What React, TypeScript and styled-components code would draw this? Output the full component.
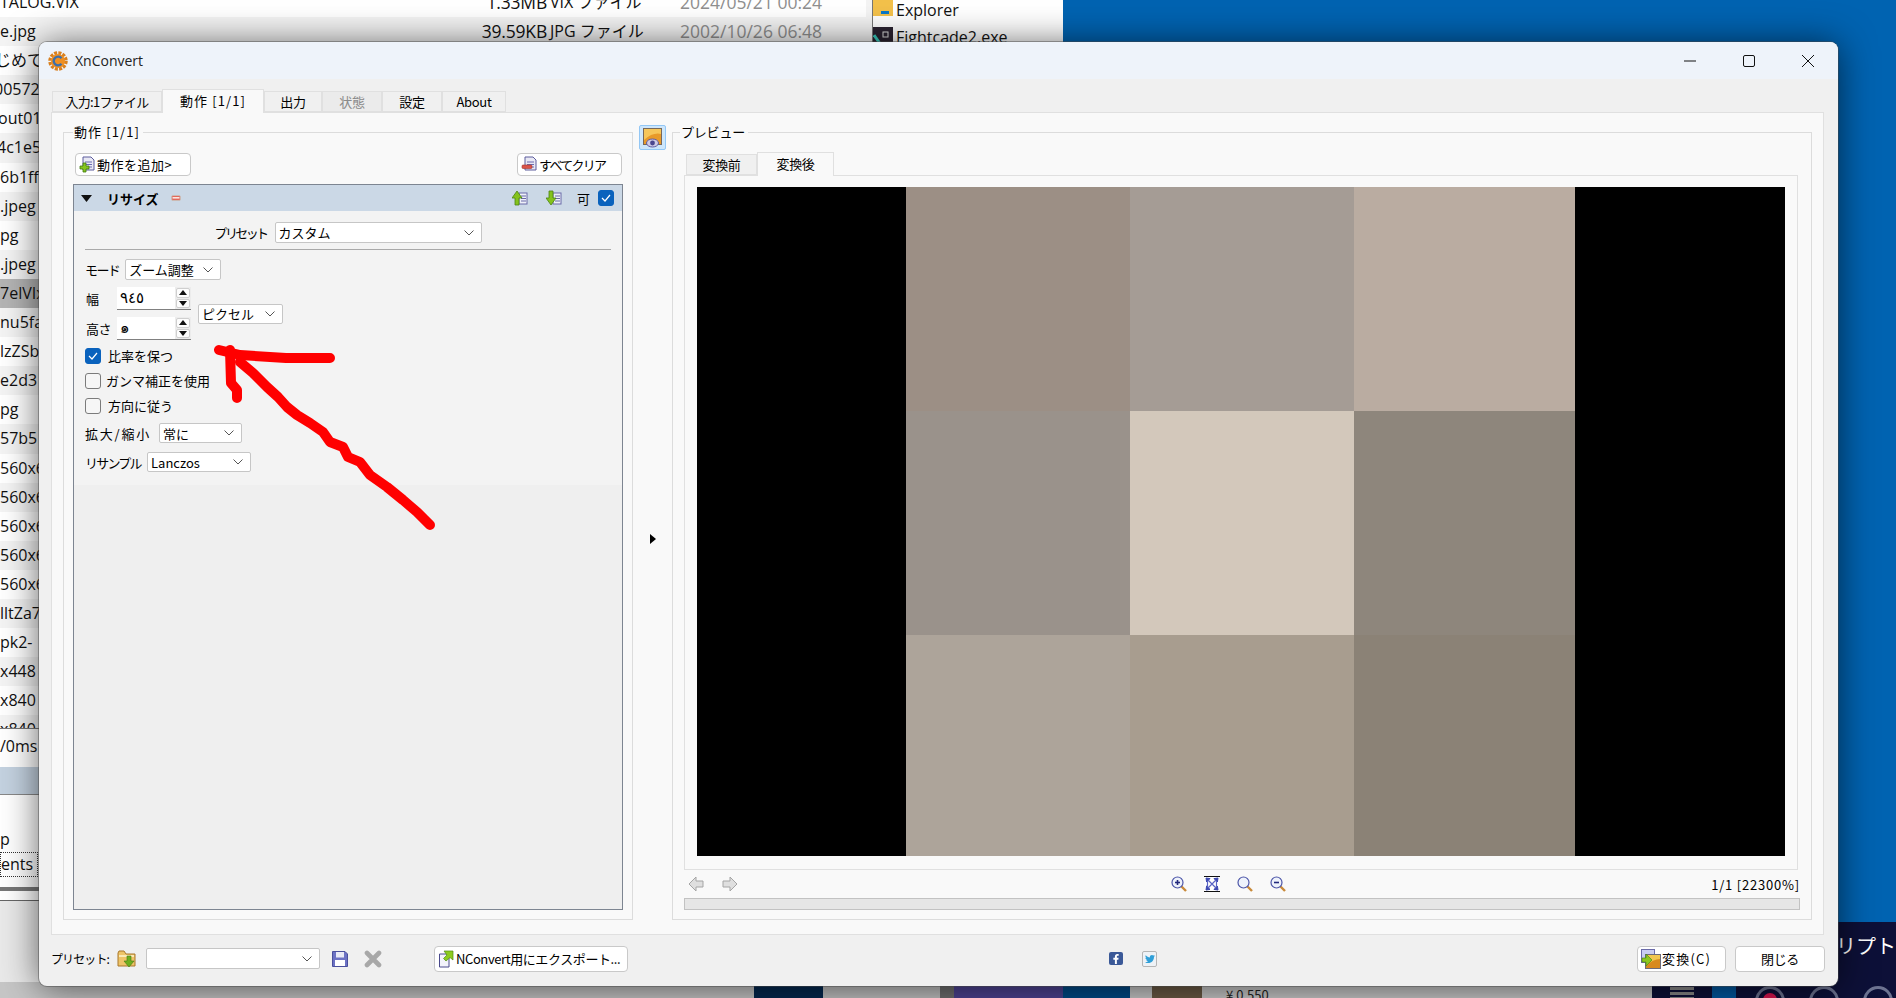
import React from 'react';
import styled, { createGlobalStyle } from 'styled-components';
import { FaFacebookF, FaTwitter } from 'react-icons/fa';

const UI_FONT = `"Noto Sans CJK JP", "Noto Sans", sans-serif`;
const LIST_FONT = `"Open Sans", "Noto Sans CJK JP", sans-serif`;

const GlobalStyle = createGlobalStyle`
	html, body {
		margin: 0;
		padding: 0;
		overflow: hidden;
		background: #0063b1;
	}
	* {
		box-sizing: border-box;
	}
	svg {
		flex-shrink: 0;
	}
`;

// 背景 (デスクトップ)
const Desktop = styled.div`
	position: relative;
	width: 1896px;
	height: 998px;
	overflow: hidden;
	background: #0063b1;
	font-family: ${UI_FONT};
`;

const FileList = styled.div`
	position: absolute;
	left: 0;
	top: 0;
	width: 866px;
	height: 986px;
	display: flex;
	flex-direction: column;
	background: #fff;
	overflow: hidden;
	font-family: ${LIST_FONT};
	font-size: 16px;
	color: #111;
`;

const FileRows = styled.div`
	flex: 0 0 740px;
	margin-top: -12px;
	overflow: hidden;
`;

const FileRow = styled.div<{ $selected?: boolean }>`
	display: grid;
	grid-template-columns: 460px 87px 133px 155px;
	height: 29.1px;
	line-height: 29px;
	white-space: nowrap;
	background: ${(p) => (p.$selected ? '#b4b4b4' : 'transparent')};
	&:nth-child(even) {
		background: ${(p) => (p.$selected ? '#b4b4b4' : '#f4f4f4')};
	}
`;

const FileName = styled.span<{ $shift?: number }>`
	margin-left: ${(p) => p.$shift ?? 0}px;
`;

const FileSize = styled.span`
	text-align: right;
	font-size: 17.5px;
	letter-spacing: -0.2px;
`;

const FileType = styled.span`
	padding-left: 3px;
`;

const FileDate = styled.span`
	color: #8f8f8f;
	font-size: 17.5px;
`;

const LogLine = styled.div`
	flex: 0 0 39px;
	border-top: 1px solid #777;
	line-height: 34px;
`;

const LogBand = styled.div`
	flex: 0 0 28px;
	background: #c4d2e0;
	border-bottom: 1px solid #888;
`;

const LogText = styled.div`
	flex: 0 0 56px;
	padding-top: 31px;
	line-height: 26px;
`;

const LogFocus = styled.div`
	flex: 0 0 25px;
	width: 38px;
	line-height: 22px;
	border: 1px dotted #333;
`;

const LogSplit = styled.div`
	flex: 0 0 4px;
	margin-top: 10px;
	background: #777;
`;

const LogRule = styled.div`
	flex: 0 0 1px;
	margin-top: 9px;
	background: #666;
`;

const LogTail = styled.div`
	flex: 1;
	background: #e9e9e9;
`;

const ExplorerPane = styled.div`
	position: absolute;
	left: 866px;
	top: 0;
	width: 197px;
	height: 60px;
	padding-left: 6px;
	background: #f4f4f4;
	font-family: ${LIST_FONT};
	font-size: 16px;
	color: #111;
`;

const ExplorerList = styled.div`
	height: 100%;
	padding-top: 0;
	background: #fff;
	border-left: 1px solid #777;
`;

const ExplorerItem = styled.div`
	display: flex;
	align-items: center;
	gap: 3px;
	height: 29px;
	margin-top: -5px;
	margin-bottom: 3px;
	white-space: nowrap;
`;

const BottomStrip = styled.div`
	position: absolute;
	left: 0;
	bottom: 0;
	width: 100%;
	height: 16px;
	display: flex;
	background: #c9c9c9;
`;

const StripPart = styled.div<{ $w: number; $bg: string }>`
	flex: 0 0 ${(p) => p.$w}px;
	display: flex;
	justify-content: center;
	background: ${(p) => p.$bg};
`;

const StripPrice = styled.span`
	margin: 6px auto 0 24px;
	font-size: 13px;
	line-height: 14px;
	color: #222;
`;

const StandShape = styled.div`
	width: 24px;
	height: 16px;
	margin-top: 0;
	background: repeating-linear-gradient(#8a8a8a 0 3px, #0d1038 3px 5px);
`;

const NavyPanel = styled.div`
	position: absolute;
	right: 0;
	top: 922px;
	width: 70px;
	height: 76px;
	padding: 10px 0 0 10px;
	background: #0d1038;
	color: #fff;
	font-size: 20px;
	line-height: 28px;
	white-space: nowrap;
`;

const TrayIcons = styled.div`
	position: absolute;
	left: 1755px;
	top: 986px;
	display: flex;
	gap: 24px;
`;

const TrayRing = styled.div<{ $color: string }>`
	width: 30px;
	height: 30px;
	border: 3px solid #6d7391;
	border-radius: 50%;
	display: flex;
	justify-content: center;
	padding-top: 4px;
	&::after {
		content: '';
		width: 14px;
		height: 14px;
		border-radius: 50%;
		background: ${(p) => p.$color};
	}
`;

// XnConvert ウィンドウ
const AppWindow = styled.div`
	position: absolute;
	left: 39px;
	top: 42px;
	width: 1799px;
	height: 944px;
	display: flex;
	flex-direction: column;
	background: #f0f0f0;
	border-radius: 8px;
	box-shadow: 0 0 0 1px rgba(70, 70, 70, 0.45), 0 2px 36px rgba(0, 0, 0, 0.62);
	overflow: hidden;
	color: #000;
	font-size: 13px;
`;

const TitleBar = styled.div`
	flex: 0 0 37px;
	display: flex;
	align-items: center;
	padding-left: 9px;
	background: #eef3fa;
`;

const AppTitle = styled.span`
	margin-left: 7px;
	font-family: "Open Sans", sans-serif;
	font-size: 14px;
	color: #222;
`;

const WindowButtons = styled.div`
	margin-left: auto;
	display: flex;
	padding-right: 24px;
	gap: 47px;
	padding-top: 1px;
`;

const Body = styled.div`
	flex: 1;
	display: flex;
	flex-direction: column;
	min-height: 0;
	padding: 0 14px 0 12px;
`;

const TabBar = styled.div<{ $h: number }>`
	flex: 0 0 ${(p) => p.$h}px;
	display: flex;
	align-items: flex-end;
	padding-left: ${(p) => (p.$h > 30 ? 1 : 2)}px;
`;

const Tab = styled.div<{ $w: number; $active?: boolean; $off?: boolean; $track?: number }>`
	position: relative;
	width: ${(p) => p.$w}px;
	height: ${(p) => (p.$active ? 24 : 21)}px;
	margin-bottom: ${(p) => (p.$active ? -1 : 0)}px;
	padding-bottom: ${(p) => (p.$active ? 2 : 1)}px;
	display: flex;
	align-items: center;
	justify-content: center;
	border: 1px solid #e0e0e0;
	border-bottom: ${(p) => (p.$active ? 'none' : '1px solid #e0e0e0')};
	background: ${(p) => (p.$active ? '#f9f9f9' : p.$off ? '#ebebeb' : '#f0f0f0')};
	color: ${(p) => (p.$off ? '#8a8a8a' : '#000')};
	font-size: 13px;
	letter-spacing: ${(p) => p.$track ?? -0.3}px;
	white-space: nowrap;
	z-index: ${(p) => (p.$active ? 1 : 0)};
`;

const TabPane = styled.div`
	flex: 0 0 822px;
	display: flex;
	padding: 19px 11px 14px;
	background: #f9f9f9;
	border: 1px solid #e0e0e0;
`;

const Group = styled.div<{ $width?: number }>`
	position: relative;
	flex: ${(p) => (p.$width ? `0 0 ${p.$width}px` : '1')};
	display: flex;
	flex-direction: column;
	min-width: 0;
	border: 1px solid #dcdcdc;
`;

const GroupTitle = styled.span<{ $left: number; $track: number }>`
	position: absolute;
	left: ${(p) => p.$left}px;
	top: -11px;
	padding: 0 3px 0 1px;
	background: #f9f9f9;
	font-size: 13px;
	line-height: 20px;
	letter-spacing: ${(p) => p.$track}px;
`;

const ActionColumn = styled.div`
	flex: 1;
	display: flex;
	flex-direction: column;
	padding: 20px 9px 9px;
`;

const ButtonRow = styled.div`
	flex: 0 0 23px;
	display: flex;
	justify-content: space-between;
	padding: 0 1px 0 2px;
	margin-bottom: 8px;
`;

const PushButton = styled.div<{ $w: number; $h?: number; $track?: number; $center?: boolean }>`
	width: ${(p) => p.$w}px;
	height: ${(p) => p.$h ?? 23}px;
	display: flex;
	align-items: center;
	justify-content: ${(p) => (p.$center ? 'center' : 'flex-start')};
	gap: 1px;
	padding-left: ${(p) => (p.$center ? 0 : 3)}px;
	background: #fff;
	border: 1px solid #c9c9c9;
	border-radius: 4px;
	font-size: 13px;
	letter-spacing: ${(p) => p.$track ?? -0.4}px;
	white-space: nowrap;
`;

const ActionPanel = styled.div`
	flex: 1;
	display: flex;
	flex-direction: column;
	background: #efefef;
	border: 1px solid #7d8591;
`;

const ActionHeader = styled.div`
	flex: 0 0 26px;
	display: flex;
	align-items: center;
	padding: 0 8px 0 7px;
	background: #cbd8e6;
`;

const ActionName = styled.span`
	margin-left: 15px;
	width: 64px;
	font-weight: 700;
	font-size: 13px;
`;

const HeaderTools = styled.div`
	margin-left: auto;
	display: flex;
	align-items: center;
`;

const EnableLabel = styled.span`
	margin: 0 8px 0 15px;
	font-size: 13px;
`;

const ActionBody = styled.div`
	flex: 0 0 274px;
	display: flex;
	flex-direction: column;
	padding: 11px 11px 0;
	background: #f3f3f3;
`;

const PresetRow = styled.div`
	display: flex;
	align-items: center;
	justify-content: center;
	gap: 8px;
	height: 21px;
`;

const Divider = styled.div`
	height: 1px;
	margin: 6px 0 9px;
	background: #a9a9a9;
`;

const Field = styled.div<{ $gap?: number }>`
	display: flex;
	align-items: center;
	gap: ${(p) => p.$gap ?? 6}px;
	height: 21px;
	margin-bottom: 7px;
`;

const FieldLabel = styled.span<{ $w?: number; $track?: number }>`
	${(p) => (p.$w ? `flex: 0 0 ${p.$w}px;` : '')}
	font-size: 13px;
	letter-spacing: ${(p) => p.$track ?? -0.5}px;
	white-space: nowrap;
`;

const Combo = styled.div<{ $w: number; $h?: number }>`
	flex: 0 0 ${(p) => p.$w}px;
	width: ${(p) => p.$w}px;
	height: ${(p) => p.$h ?? 21}px;
	display: flex;
	align-items: center;
	justify-content: space-between;
	padding: 0 7px 0 3px;
	background: #fff;
	border: 1px solid #c6c6c6;
	border-radius: 2px;
	font-size: 13px;
	white-space: nowrap;
`;

const SizeBlock = styled.div`
	display: flex;
	align-items: center;
	gap: 7px;
	margin-left: 1px;
`;

const SizeGrid = styled.div`
	display: grid;
	grid-template-columns: 31px 74px;
	row-gap: 7px;
	align-items: center;
`;

const SpinField = styled.div`
	display: flex;
	height: 23px;
	background: #ececec;
`;

const SpinValue = styled.div`
	flex: 1;
	padding-left: 3px;
	background: #fff;
	border-bottom: 1px solid #808080;
	font-family: "DejaVu Sans", "Noto Sans", sans-serif;
	font-size: 15px;
	line-height: 22px;
	letter-spacing: 1px;
`;

const SpinButtons = styled.div`
	flex: 0 0 16px;
	display: flex;
	flex-direction: column;
	gap: 1px;
	padding: 1px;
	border-bottom: 1px solid #808080;
`;

const SpinStep = styled.div`
	flex: 1;
	display: flex;
	align-items: center;
	justify-content: center;
	background: #fdfdfd;
	border: 1px solid #cfcfcf;
	border-radius: 2px;
`;

const Check = styled.div<{ $gap?: number; $top?: number }>`
	display: flex;
	align-items: center;
	gap: ${(p) => p.$gap ?? 7}px;
	height: 16px;
	margin-top: ${(p) => p.$top ?? 9}px;
	font-size: 13px;
	line-height: 14px;
	white-space: nowrap;
`;

const CheckBox = styled.span<{ $on?: boolean }>`
	flex: 0 0 16px;
	width: 16px;
	height: 16px;
	display: flex;
	align-items: center;
	justify-content: center;
	background: ${(p) => (p.$on ? '#0a62bd' : '#f6f6f6')};
	border: 1px solid ${(p) => (p.$on ? '#0a62bd' : '#7b7b7b')};
	border-radius: 3px;
`;

const SelectField = styled(Field)`
	height: 20px;
	margin: 9px 0 0;
`;

const Splitter = styled.div`
	flex: 0 0 39px;
	display: flex;
	flex-direction: column;
	align-items: center;
`;

const ViewToggle = styled.div`
	flex: 0 0 25px;
	width: 27px;
	margin-top: -7px;
	display: flex;
	align-items: center;
	justify-content: center;
	background: #cde6fb;
	border: 1px solid #93c7f5;
	border-radius: 2px;
`;

const CollapseArrow = styled.div`
	margin-top: 384px;
	border-left: 6px solid #000;
	border-top: 5px solid transparent;
	border-bottom: 5px solid transparent;
`;

const PreviewColumn = styled.div`
	flex: 1;
	display: flex;
	flex-direction: column;
	min-height: 0;
	padding: 19px 11px 9px 11px;
`;

const PreviewPane = styled.div`
	flex: 0 0 695px;
	margin-right: 2px;
	padding: 11px 12px 13px;
	background: #f9f9f9;
	border: 1px solid #e0e0e0;
`;

const PreviewImage = styled.div`
	display: grid;
	grid-template-columns: 209px 224px 224px 221px 210px;
	grid-template-rows: 224px 224px 221px;
	height: 669px;
`;

const Matte = styled.div<{ $col: number }>`
	grid-row: 1 / span 3;
	grid-column: ${(p) => p.$col};
	background: #000;
`;

const Tile = styled.div<{ $c: string }>`
	background: ${(p) => p.$c};
`;

const ViewTools = styled.div`
	flex: 0 0 28px;
	display: flex;
	align-items: center;
	padding-left: 4px;
`;

const NavGroup = styled.div`
	flex: 0 0 483px;
	display: flex;
	gap: 18px;
`;

const ZoomGroup = styled.div`
	display: flex;
	gap: 17px;
`;

const ZoomLabel = styled.span`
	margin-left: auto;
	font-size: 13px;
	letter-spacing: 0.8px;
`;

const ScrollTrack = styled.div`
	flex: 0 0 12px;
	background: #e6e6e6;
	border: 1px solid #c2c2c2;
`;

const Footer = styled.div`
	flex: 1;
	display: flex;
	align-items: center;
	margin-right: -14px;
	padding-bottom: 4px;
`;

const FooterLabel = styled.span`
	flex: 0 0 66px;
	font-size: 12px;
	letter-spacing: -0.9px;
	white-space: nowrap;
`;

const Spaced = styled.div<{ $left: number }>`
	display: flex;
	margin-left: ${(p) => p.$left}px;
`;

const SocialBox = styled.div<{ $bg: string; $c: string; $line?: string }>`
	width: ${(p) => (p.$line ? 15 : 14)}px;
	height: ${(p) => (p.$line ? 16 : 13)}px;
	display: flex;
	align-items: center;
	justify-content: center;
	background: ${(p) => p.$bg};
	color: ${(p) => p.$c};
	border: ${(p) => (p.$line ? `1px solid ${p.$line}` : 'none')};
	border-radius: 2px;
	font-size: 10px;
`;

const ScribbleLayer = styled.svg`
	position: absolute;
	left: 0;
	top: 0;
	pointer-events: none;
`;

// アイコン
const Chevron = () => (
	<svg width='10' height='6' viewBox='0 0 10 6'>
		<path d='M0.5 0.5 L5 5 L9.5 0.5' fill='none' stroke='#555' strokeWidth='1' />
	</svg>
);

const Tick = () => (
	<svg width='10' height='8' viewBox='0 0 10 8'>
		<path d='M1 4 L4 7 L9 1' fill='none' stroke='#fff' strokeWidth='1.2' />
	</svg>
);

const SpinArrow = ({ up }: { up?: boolean }) => (
	<svg width='8' height='5' viewBox='0 0 8 5'>
		<path d={up ? 'M4 0 L8 5 L0 5 Z' : 'M0 0 L8 0 L4 5 Z'} fill='#111' />
	</svg>
);

const CollapseTriangle = () => (
	<svg width='11' height='7' viewBox='0 0 11 7'>
		<path d='M0 0 H11 L5.5 7 Z' fill='#111' />
	</svg>
);

const AppLogo = () => (
	<svg width='20' height='20' viewBox='0 0 20 20'>
		<circle cx='10' cy='10' r='8' fill='none' stroke='#d9801f' strokeWidth='3.5' strokeDasharray='3 1.2' />
		<circle cx='10' cy='10' r='7' fill='#ef8f22' />
		<path d='M13.5 7.2 A4.4 4.4 0 1 0 13.5 12.8' fill='none' stroke='#3f6fa8' strokeWidth='2.4' />
	</svg>
);

const Doc = () => (
	<g>
		<path d='M4 1 H12 L15 4 V14 H4 Z' fill='#e8e8f4' stroke='#5c5c9c' />
		<path d='M6 6 H13 M6 8.5 H13 M6 11 H13' stroke='#6a6ab0' />
	</g>
);

const AddDocIcon = () => (
	<svg width='17' height='17' viewBox='0 0 17 17'>
		<Doc />
		<path d='M4 7 H7 V10 H10 V13 H7 V16 H4 V13 H1 V10 H4 Z' fill='#86c51e' stroke='#3f7a10' strokeWidth='0.8' />
	</svg>
);

const ClearDocIcon = () => (
	<svg width='17' height='17' viewBox='0 0 17 17'>
		<Doc />
		<rect x='1' y='9' width='10' height='3.5' rx='1' fill='#d9534a' stroke='#a5382e' strokeWidth='0.6' />
	</svg>
);

const RedMinus = () => (
	<svg width='10' height='6' viewBox='0 0 10 6'>
		<rect x='0.5' y='0.5' width='9' height='5' rx='1.5' fill='#e2685c' stroke='#c8c0b8' strokeWidth='0.8' />
		<rect x='1.5' y='2' width='7' height='1.6' fill='#fbe5e0' />
	</svg>
);

const MoveIcon = ({ down }: { down?: boolean }) => (
	<svg width='16' height='16' viewBox='0 0 16 16'>
		<rect x='7' y='3' width='8' height='11' fill='#eef0f8' stroke='#6a6aa8' />
		<path d='M9 6 H14 M9 8.5 H14 M9 11 H14' stroke='#6a6aa8' />
		<path
			d={down ? 'M3 1 H7 V8 H10 L5 15 L0 8 H3 Z' : 'M5 1 L10 8 H7 V15 H3 V8 H0 Z'}
			fill='#84c21c'
			stroke='#4c8412'
			strokeWidth='0.8'
		/>
	</svg>
);

const PreviewEyeIcon = () => (
	<svg width='19' height='20' viewBox='0 0 19 20'>
		<rect x='0.5' y='0.5' width='18' height='16' fill='#e89a2a' stroke='#76685c' />
		<path d='M1 1 H18 V6 Q10 4 1 12 Z' fill='#f6c65a' />
		<ellipse cx='9.5' cy='15' rx='6' ry='4' fill='#cfcbe6' stroke='#5f5aa0' />
		<circle cx='9.5' cy='15' r='2.4' fill='#4c478f' />
	</svg>
);

const NavArrow = ({ right }: { right?: boolean }) => (
	<svg width='16' height='16' viewBox='0 0 16 16'>
		<path
			d={right ? 'M1 5 H8 V1 L15 8 L8 15 V11 H1 Z' : 'M15 5 H8 V1 L1 8 L8 15 V11 H15 Z'}
			fill='#dfdfdf'
			stroke='#a5a5a5'
		/>
	</svg>
);

const Magnifier = ({ mark }: { mark?: 'in' | 'out' }) => (
	<svg width='16' height='16' viewBox='0 0 16 16'>
		<path d='M10 10 L15 15' stroke='#c98a3a' strokeWidth='2.4' />
		<circle cx='6.5' cy='6.5' r='5.5' fill='#eef2fb' stroke='#4d56a8' strokeWidth='1.2' />
		{mark && <path d='M4 6.5 H9' stroke='#23297c' strokeWidth='1.6' />}
		{mark === 'in' && <path d='M6.5 4 V9' stroke='#23297c' strokeWidth='1.6' />}
	</svg>
);

const FitIcon = () => (
	<svg width='16' height='16' viewBox='0 0 16 16'>
		<rect x='0.5' y='0.5' width='15' height='15' fill='#fff' />
		<path d='M0 0.5 H16 M0 15.5 H16' stroke='#111' />
		<path d='M2 2 L6 2.6 L2.6 6 Z M14 2 L10 2.6 L13.4 6 Z M2 14 L6 13.4 L2.6 10 Z M14 14 L10 13.4 L13.4 10 Z' fill='#3a45b0' stroke='#3a45b0' />
		<path d='M4 4 L12 12 M12 4 L4 12 M3.5 5 V11 M12.5 5 V11' stroke='#5a64c4' strokeWidth='1.2' />
	</svg>
);

const FolderIcon = () => (
	<svg width='19' height='18' viewBox='0 0 19 18'>
		<path d='M1 3 L1 16 H18 V4 H9 L7 1 H2 Z' fill='#eec468' stroke='#a8772a' />
		<path d='M2 5 H17 V7 H2 Z' fill='#fbe9b5' />
		<path d='M10 6 H14 V11 H17 L12 17 L7 11 H10 Z' fill='#6fae1e' stroke='#3f7a10' strokeWidth='0.6' />
	</svg>
);

const SaveIcon = () => (
	<svg width='18' height='18' viewBox='0 0 18 18'>
		<path d='M1.5 1.5 H14 L16.5 4 V16.5 H1.5 Z' fill='#6c72c4' stroke='#4a4f9c' />
		<rect x='5' y='2' width='8' height='5.5' fill='#e9eaf6' />
		<rect x='4' y='10' width='10' height='6' fill='#fff' />
	</svg>
);

const DeleteIcon = () => (
	<svg width='18' height='18' viewBox='0 0 18 18'>
		<path d='M3 3 L15 15 M15 3 L3 15' stroke='#a8a8a8' strokeWidth='4.6' strokeLinecap='round' />
	</svg>
);

const ExportIcon = () => (
	<svg width='17' height='18' viewBox='0 0 17 18'>
		<path d='M1.5 4 H11 V17 H1.5 Z' fill='#f3f3fb' stroke='#4a4a8c' />
		<path d='M6 1 H15 V10 L12 7.5 L8 11 L5.5 8.5 L9 5 Z' fill='#8ccb1f' stroke='#4f8a12' strokeWidth='0.7' />
	</svg>
);

const ConvertIcon = () => (
	<svg width='20' height='20' viewBox='0 0 20 20'>
		<rect x='0.5' y='0.5' width='13' height='13' fill='#c9cdf0' stroke='#6a6aa8' />
		<rect x='4.5' y='5.5' width='15' height='14' fill='#d88a1e' stroke='#6b6b7c' />
		<path d='M5 6 H19 V10 Q12 10 5 17 Z' fill='#f2c64f' />
		<path d='M1 9 H5 V5 L11 11 L5 17 V13 H1 Z' fill='#8cc81f' stroke='#4f8a12' strokeWidth='0.7' />
	</svg>
);

const MinimizeGlyph = () => (
	<svg width='12' height='12' viewBox='0 0 12 12'>
		<path d='M0 6 H12' stroke='#111' strokeWidth='1' />
	</svg>
);

const MaximizeGlyph = () => (
	<svg width='12' height='12' viewBox='0 0 12 12'>
		<rect x='0.5' y='0.5' width='11' height='11' rx='1.5' fill='none' stroke='#111' strokeWidth='1' />
	</svg>
);

const CloseGlyph = () => (
	<svg width='12' height='12' viewBox='0 0 12 12'>
		<path d='M0 0 L12 12 M12 0 L0 12' stroke='#111' strokeWidth='1' />
	</svg>
);

const FolderTile = () => (
	<svg width='20' height='20' viewBox='0 0 20 20'>
		<path d='M0 0 H20 V16 H0 Z' fill='#f3c14b' />
		<rect x='8' y='11' width='8' height='3' fill='#0a78c8' />
	</svg>
);

const AppTile = () => (
	<svg width='20' height='20' viewBox='0 0 20 20'>
		<rect width='20' height='20' fill='#2a2230' />
		<rect x='10' y='5' width='5' height='5' fill='none' stroke='#ddd' />
		<path d='M1 8 L8 18' stroke='#39cdbf' strokeWidth='3' />
	</svg>
);

type FileEntry = { name: string; size?: string; type?: string; date?: string; selected?: boolean; shift?: number };

const files: FileEntry[] = [
	{ name: 'TALOG.VIX', size: '1.33MB', type: 'VIX ファイル', date: '2024/05/21 00:24' },
	{ name: 'e.jpg', size: '39.59KB', type: 'JPG ファイル', date: '2002/10/26 06:48' },
	{ name: 'じめて', shift: -5 },
	{ name: '00572', shift: -6 },
	{ name: 'out01', shift: -2 },
	{ name: '4c1e5', shift: -3 },
	{ name: '6b1ff' },
	{ name: '.jpeg' },
	{ name: 'pg' },
	{ name: '.jpeg' },
	{ name: '7elVIx', selected: true },
	{ name: 'nu5fa' },
	{ name: 'lzZSb' },
	{ name: 'e2d3' },
	{ name: 'pg' },
	{ name: '57b5' },
	{ name: '560x6' },
	{ name: '560x6' },
	{ name: '560x6' },
	{ name: '560x6' },
	{ name: '560x6' },
	{ name: 'lltZa7' },
	{ name: 'pk2-' },
	{ name: 'x448' },
	{ name: 'x840' },
	{ name: 'x840' },
];

const tiles = [
	['#9c8f85', '#a59c95', '#baaca1'],
	['#9a928b', '#d3c8bb', '#8e867c'],
	['#ada49a', '#a89d8f', '#8b8276'],
];

const mainTabs = [
	{ label: '入力:1ファイル', w: 110, track: -0.7 },
	{ label: '動作 [1/1]', w: 102, active: true, track: 1.1 },
	{ label: '出力', w: 58 },
	{ label: '状態', w: 60, off: true },
	{ label: '設定', w: 60 },
	{ label: 'About', w: 64 },
];

function App() {
	return (
		<Desktop>
			<GlobalStyle />
			<FileList>
				<FileRows>
					{files.map((f, i) => (
						<FileRow key={i} $selected={f.selected}>
							<FileName $shift={f.shift}>{f.name}</FileName>
							<FileSize>{f.size}</FileSize>
							<FileType>{f.type}</FileType>
							<FileDate>{f.date}</FileDate>
						</FileRow>
					))}
				</FileRows>
				<LogLine>/0ms</LogLine>
				<LogBand />
				<LogText>p</LogText>
				<LogFocus>ents</LogFocus>
				<LogSplit />
				<LogRule />
				<LogTail />
			</FileList>
			<ExplorerPane>
				<ExplorerList>
					<ExplorerItem>
						<FolderTile />
						Explorer
					</ExplorerItem>
					<ExplorerItem>
						<AppTile />
						Fightcade2.exe
					</ExplorerItem>
				</ExplorerList>
			</ExplorerPane>
			<BottomStrip>
				<StripPart $w={754} $bg='#c6c6c6' />
				<StripPart $w={69} $bg='#04284f' />
				<StripPart $w={117} $bg='#c2c2c2' />
				<StripPart $w={14} $bg='#6f6f6f' />
				<StripPart $w={109} $bg='#4d4392' />
				<StripPart $w={67} $bg='#014a87' />
				<StripPart $w={22} $bg='#c8c8c8' />
				<StripPart $w={50} $bg='#6b5a44' />
				<StripPart $w={450} $bg='#c9c9c9'>
					<StripPrice>¥ 0,550</StripPrice>
				</StripPart>
				<StripPart $w={60} $bg='#0d1038'>
					<StandShape />
				</StripPart>
				<StripPart $w={24} $bg='#0058a0' />
				<StripPart $w={160} $bg='#0d1038' />
			</BottomStrip>
			<NavyPanel>リプト</NavyPanel>
			<TrayIcons>
				<TrayRing $color='#d9164f' />
				<TrayRing $color='transparent' />
				<TrayRing $color='transparent' />
			</TrayIcons>

			<AppWindow>
				<TitleBar>
					<AppLogo />
					<AppTitle>XnConvert</AppTitle>
					<WindowButtons>
						<MinimizeGlyph />
						<MaximizeGlyph />
						<CloseGlyph />
					</WindowButtons>
				</TitleBar>
				<Body>
					<TabBar $h={33}>
						{mainTabs.map((t) => (
							<Tab key={t.label} $w={t.w} $active={t.active} $off={t.off} $track={t.track}>
								{t.label}
							</Tab>
						))}
					</TabBar>
					<TabPane>
						<Group $width={570}>
							<GroupTitle $left={9} $track={1.1}>
								動作 [1/1]
							</GroupTitle>
							<ActionColumn>
								<ButtonRow>
									<PushButton $w={116} $track={0.5}>
										<AddDocIcon />
										動作を追加&gt;
									</PushButton>
									<PushButton $w={105} $track={-1.7}>
										<ClearDocIcon />
										すべてクリア
									</PushButton>
								</ButtonRow>
								<ActionPanel>
									<ActionHeader>
										<CollapseTriangle />
										<ActionName>リサイズ</ActionName>
										<RedMinus />
										<HeaderTools>
											<MoveIcon />
											<Spaced $left={18}>
												<MoveIcon down />
											</Spaced>
											<EnableLabel>可</EnableLabel>
											<CheckBox $on>
												<Tick />
											</CheckBox>
										</HeaderTools>
									</ActionHeader>
									<ActionBody>
										<PresetRow>
											<FieldLabel $w={51} $track={-2.6}>
												プリセット
											</FieldLabel>
											<Combo $w={207}>
												カスタム
												<Chevron />
											</Combo>
										</PresetRow>
										<Divider />
										<Field>
											<FieldLabel $w={34} $track={-1.6}>
												モード
											</FieldLabel>
											<Combo $w={96}>
												ズーム調整
												<Chevron />
											</Combo>
										</Field>
										<SizeBlock>
											<SizeGrid>
												<FieldLabel>幅</FieldLabel>
												<SpinField>
													<SpinValue>٩٤٥</SpinValue>
													<SpinButtons>
														<SpinStep>
															<SpinArrow up />
														</SpinStep>
														<SpinStep>
															<SpinArrow />
														</SpinStep>
													</SpinButtons>
												</SpinField>
												<FieldLabel>高さ</FieldLabel>
												<SpinField>
													<SpinValue>๑</SpinValue>
													<SpinButtons>
														<SpinStep>
															<SpinArrow up />
														</SpinStep>
														<SpinStep>
															<SpinArrow />
														</SpinStep>
													</SpinButtons>
												</SpinField>
											</SizeGrid>
											<Combo $w={85} $h={20}>
												ピクセル
												<Chevron />
											</Combo>
										</SizeBlock>
										<Check $top={8}>
											<CheckBox $on>
												<Tick />
											</CheckBox>
											比率を保つ
										</Check>
										<Check $gap={5}>
											<CheckBox />
											ガンマ補正を使用
										</Check>
										<Check>
											<CheckBox />
											方向に従う
										</Check>
										<SelectField>
											<FieldLabel $w={68} $track={1.8}>
												拡大/縮小
											</FieldLabel>
											<Combo $w={83} $h={20}>
												常に
												<Chevron />
											</Combo>
										</SelectField>
										<SelectField>
											<FieldLabel $w={56} $track={-1.8}>
												リサンプル
											</FieldLabel>
											<Combo $w={104} $h={20}>
												Lanczos
												<Chevron />
											</Combo>
										</SelectField>
									</ActionBody>
								</ActionPanel>
							</ActionColumn>
						</Group>
						<Splitter>
							<ViewToggle>
								<PreviewEyeIcon />
							</ViewToggle>
							<CollapseArrow />
						</Splitter>
						<Group>
							<GroupTitle $left={7} $track={-0.2}>
								プレビュー
							</GroupTitle>
							<PreviewColumn>
								<TabBar $h={22}>
									<Tab $w={71}>変換前</Tab>
									<Tab $w={77} $active>
										変換後
									</Tab>
								</TabBar>
								<PreviewPane>
									<PreviewImage>
										<Matte $col={1} />
										{tiles.flat().map((c, i) => (
											<Tile key={i} $c={c} />
										))}
										<Matte $col={5} />
									</PreviewImage>
								</PreviewPane>
								<ViewTools>
									<NavGroup>
										<NavArrow />
										<NavArrow right />
									</NavGroup>
									<ZoomGroup>
										<Magnifier mark='in' />
										<FitIcon />
										<Magnifier />
										<Magnifier mark='out' />
									</ZoomGroup>
									<ZoomLabel>1/1 [22300%]</ZoomLabel>
								</ViewTools>
								<ScrollTrack />
							</PreviewColumn>
						</Group>
					</TabPane>
					<Footer>
						<FooterLabel>プリセット:</FooterLabel>
						<FolderIcon />
						<Spaced $left={10}>
							<Combo $w={174}>
								<span />
								<Chevron />
							</Combo>
						</Spaced>
						<Spaced $left={11}>
							<SaveIcon />
						</Spaced>
						<Spaced $left={15}>
							<DeleteIcon />
						</Spaced>
						<Spaced $left={52}>
							<PushButton $w={194} $h={26}>
								<ExportIcon />
								NConvert用にエクスポート...
							</PushButton>
						</Spaced>
						<Spaced $left={481}>
							<SocialBox $bg='#3b5998' $c='#fff'>
								<FaFacebookF />
							</SocialBox>
						</Spaced>
						<Spaced $left={19}>
							<SocialBox $bg='#eef2f6' $c='#2f9fd8' $line='#b5b5b5'>
								<FaTwitter />
							</SocialBox>
						</Spaced>
						<Spaced $left={480}>
							<PushButton $w={89} $h={26} $track={1.2}>
								<ConvertIcon />
								変換(C)
							</PushButton>
						</Spaced>
						<Spaced $left={9}>
							<PushButton $w={90} $h={26} $center>
								閉じる
							</PushButton>
						</Spaced>
					</Footer>
				</Body>
			</AppWindow>

			<ScribbleLayer width='1896' height='998' viewBox='0 0 1896 998'>
				<g fill='none' stroke='#ff0000' strokeWidth='10' strokeLinecap='round' strokeLinejoin='round'>
					<path d='M219 350 L240 355 L286 358 L330 358' />
					<path d='M230 350 L231 383 L237 390 L237 398' />
					<path d='M240 362 L253 373 L267 387 L278 397 L287 407 L297 415 L310 423 L323 432 L330 442 L343 447 L348 457 L360 462 L370 475 L387 487 L403 500 L417 512 L430 525' />
				</g>
			</ScribbleLayer>
		</Desktop>
	);
}

export default App;
